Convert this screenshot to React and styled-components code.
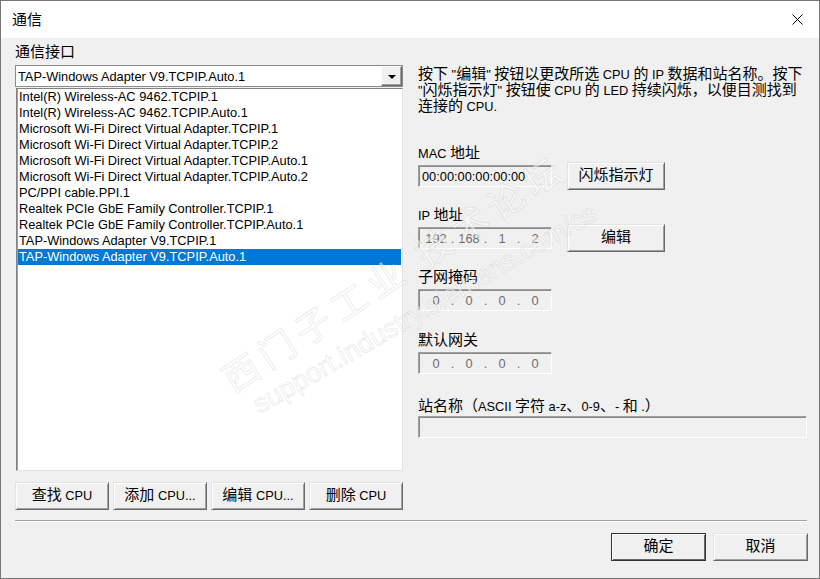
import React from 'react';
import styled, { createGlobalStyle } from 'styled-components';

const GlobalStyle = createGlobalStyle`
  html, body { margin: 0; padding: 0; background: #ffffff; }
  body {
    font-family: "Liberation Sans", "Noto Sans CJK SC", sans-serif;
    font-size: 12.8px;
    color: #000;
  }
  * { box-sizing: border-box; }
`;

const Window = styled.div`
  position: relative;
  width: 820px;
  height: 579px;
  border: 1px solid #777;
  display: flex;
  flex-direction: column;
  overflow: hidden;
  background: #f0f0f0;
`;

const TitleBar = styled.div`
  height: 37px;
  flex: none;
  background: #fff;
  display: flex;
  align-items: center;
  justify-content: space-between;
  padding-left: 11px;
  line-height: 16px;
`;

const Title = styled.div`
  margin-top: 3px;
`;

const CloseBox = styled.div`
  width: 44px;
  height: 37px;
  display: flex;
  align-items: center;
  justify-content: center;
`;

const Body = styled.div`
  flex: 1;
  display: flex;
  flex-direction: column;
  padding: 6px 11px 0 14px;
`;

const Main = styled.div`
  display: flex;
  gap: 15px;
`;

const LeftPane = styled.div`
  width: 388px;
  display: flex;
  flex-direction: column;
`;

const RightPane = styled.div`
  flex: 1;
  display: flex;
  flex-direction: column;
`;

const Run = styled.span`
  white-space: pre;
`;

const Zh = styled.span`
  font-family: "Noto Sans CJK SC", sans-serif;
  font-size: 15px;
  line-height: 0;
`;

const Label = styled.div`
  height: 16px;
  line-height: 18px;
  white-space: nowrap;
  margin-top: ${p => p.$top || 0}px;
`;

const Combo = styled.div`
  height: 22px;
  background: #fff;
  border: 1px solid #8c8c8c;
  display: flex;
  align-items: center;
  justify-content: space-between;
  padding-left: 2px;
  margin-top: 5px;
`;

const DropButton = styled.div`
  width: 21px;
  height: 20px;
  background: #f0f0f0;
  border-style: solid;
  border-width: 1px;
  border-color: #fff #696969 #696969 #fff;
  box-shadow: inset -1px -1px 0 #a0a0a0;
  display: flex;
  align-items: center;
  justify-content: center;
`;

const Arrow = styled.div`
  width: 0;
  height: 0;
  border-left: 4px solid transparent;
  border-right: 4px solid transparent;
  border-top: 4px solid #000;
  margin-top: 1px;
`;

const List = styled.div`
  margin: 1px 0 0 1px;
  height: 383px;
  background: #fff;
  border-style: solid;
  border-width: 1px;
  border-color: #828282 #e3e3e3 #e3e3e3 #828282;
  box-shadow: inset 1px 0 0 #a0a0a0;
  padding: 0 1px;
`;

const Item = styled.div`
  height: 16px;
  line-height: 16px;
  padding-left: 1px;
  white-space: nowrap;
  background: ${p => (p.$selected ? '#0078d7' : 'transparent')};
  color: ${p => (p.$selected ? '#fff' : '#000')};
`;

const ButtonRow = styled.div`
  display: flex;
  justify-content: space-between;
  margin-top: 11px;
`;

const Button = styled.div`
  width: ${p => p.$w || 94}px;
  height: 28px;
  flex: none;
  background: #f0f0f0;
  border-style: solid;
  border-width: 1px;
  border-color: ${p => (p.$default ? '#333' : '#e3e3e3 #696969 #696969 #e3e3e3')};
  box-shadow: ${p => (p.$default
    ? 'inset 1px 1px 0 #fff, inset -1px -1px 0 #696969'
    : 'inset 1px 1px 0 #fff, inset -1px -1px 0 #a0a0a0')};
  display: flex;
  align-items: center;
  justify-content: center;
  line-height: 16px;
  white-space: nowrap;
`;

const Separator = styled.div`
  margin-top: 10px;
  height: 2px;
  border-top: 1px solid #a0a0a0;
  border-bottom: 1px solid #fff;
  margin-right: 1px;
`;

const Footer = styled.div`
  display: flex;
  justify-content: flex-end;
  gap: 7px;
  margin-top: 11px;
`;

const Description = styled.div`
  margin-top: 23px;
  line-height: 16px;
  white-space: nowrap;
`;

const FieldRow = styled.div`
  display: flex;
  align-items: center;
  gap: 15px;
  height: 28px;
  margin-top: ${p => p.$top || 0}px;
`;

const Field = styled.div`
  width: ${p => p.$w || 134}px;
  height: 22px;
  flex: none;
  background: #f0f0f0;
  border-style: solid;
  border-width: 1px;
  border-color: #a0a0a0 #fff #fff #a0a0a0;
  box-shadow: inset 1px 1px 0 #8a8a8a;
  display: flex;
  align-items: center;
  padding-left: 3px;
  color: ${p => (p.$disabled ? '#6d6d6d' : '#000')};
  margin-top: ${p => p.$top || 0}px;
`;

const Octet = styled.span`
  width: 28px;
  text-align: center;
`;

const Dot = styled.span`
  width: 5px;
  text-align: center;
`;

const Watermark = styled.div`
  position: absolute;
  left: 211px;
  top: 360px;
  transform: rotate(-33deg);
  transform-origin: 0 0;
  pointer-events: none;
  white-space: nowrap;
  color: rgba(255, 255, 255, 0.55);
  -webkit-text-stroke: 1px rgba(110, 110, 110, 0.14);
`;

const MarkZh = styled.div`
  font-family: "Noto Sans CJK SC", sans-serif;
  font-size: 36px;
  line-height: 46px;
  letter-spacing: 7px;
`;

const MarkEn = styled.div`
  font-family: "Liberation Sans", sans-serif;
  font-size: 27px;
  line-height: 30px;
  padding-left: 12px;
  transform: rotate(3deg);
  transform-origin: 0 50%;
`;

const CJK = /([\u2E80-\u9FFF\u3000-\u303F\uFF00-\uFFEF]+)/;

// splits a label into latin and CJK runs so CJK can use the bigger face
const T = ({ children }) => (
  <Run>
    {String(children)
      .split(CJK)
      .map((part, i) => (i % 2 === 1 ? <Zh key={i}>{part}</Zh> : part))}
  </Run>
);

const interfaces = [
  'Intel(R) Wireless-AC 9462.TCPIP.1',
  'Intel(R) Wireless-AC 9462.TCPIP.Auto.1',
  'Microsoft Wi-Fi Direct Virtual Adapter.TCPIP.1',
  'Microsoft Wi-Fi Direct Virtual Adapter.TCPIP.2',
  'Microsoft Wi-Fi Direct Virtual Adapter.TCPIP.Auto.1',
  'Microsoft Wi-Fi Direct Virtual Adapter.TCPIP.Auto.2',
  'PC/PPI cable.PPI.1',
  'Realtek PCIe GbE Family Controller.TCPIP.1',
  'Realtek PCIe GbE Family Controller.TCPIP.Auto.1',
  'TAP-Windows Adapter V9.TCPIP.1',
  'TAP-Windows Adapter V9.TCPIP.Auto.1',
];

const IpValue = ({ parts }) => (
  <>
    {parts.map((p, i) => (
      <React.Fragment key={i}>
        {i > 0 && <Dot>.</Dot>}
        <Octet>{p}</Octet>
      </React.Fragment>
    ))}
  </>
);

export default function App() {
  const selected = interfaces.length - 1;
  return (
    <>
      <GlobalStyle />
      <Window>
        <TitleBar>
          <Title><T>通信</T></Title>
          <CloseBox>
            <svg width="11" height="11" viewBox="0 0 11 11">
              <path d="M0.5 0.5 L10.5 10.5 M10.5 0.5 L0.5 10.5" stroke="#000" strokeWidth="1" fill="none" />
            </svg>
          </CloseBox>
        </TitleBar>
        <Body>
          <Main>
            <LeftPane>
              <Label><T>通信接口</T></Label>
              <Combo>
                <span>{interfaces[selected]}</span>
                <DropButton><Arrow /></DropButton>
              </Combo>
              <List>
                {interfaces.map((name, i) => (
                  <Item key={name} $selected={i === selected}>{name}</Item>
                ))}
              </List>
              <ButtonRow>
                <Button><T>查找 CPU</T></Button>
                <Button><T>添加 CPU...</T></Button>
                <Button><T>编辑 CPU...</T></Button>
                <Button><T>删除 CPU</T></Button>
              </ButtonRow>
            </LeftPane>
            <RightPane>
              <Description>
                <T>按下 "编辑" 按钮以更改所选 CPU 的 IP 数据和站名称。按下</T><br />
                <T>"闪烁指示灯" 按钮使 CPU 的 LED 持续闪烁，以便目测找到</T><br />
                <T>连接的 CPU.</T>
              </Description>
              <Label $top={30}><T>MAC 地址</T></Label>
              <FieldRow $top={1}>
                <Field>00:00:00:00:00:00</Field>
                <Button $w={98}><T>闪烁指示灯</T></Button>
              </FieldRow>
              <Label $top={17}><T>IP 地址</T></Label>
              <FieldRow $top={1}>
                <Field $disabled><IpValue parts={['192', '168', '1', '2']} /></Field>
                <Button $w={98}><T>编辑</T></Button>
              </FieldRow>
              <Label $top={17}><T>子网掩码</T></Label>
              <Field $disabled $top={4}><IpValue parts={['0', '0', '0', '0']} /></Field>
              <Label $top={21}><T>默认网关</T></Label>
              <Field $disabled $top={4}><IpValue parts={['0', '0', '0', '0']} /></Field>
              <Label $top={24}><T>站名称（ASCII 字符 a-z、0-9、- 和 .）</T></Label>
              <Field $w={389} $top={2} />
            </RightPane>
          </Main>
          <Separator />
          <Footer>
            <Button $w={95} $default><T>确定</T></Button>
            <Button $w={95}><T>取消</T></Button>
          </Footer>
        </Body>
        <Watermark>
          <MarkZh>西门子工业 技术论坛</MarkZh>
          <MarkEn>support.industry.siemens.com/cs</MarkEn>
        </Watermark>
      </Window>
    </>
  );
}
